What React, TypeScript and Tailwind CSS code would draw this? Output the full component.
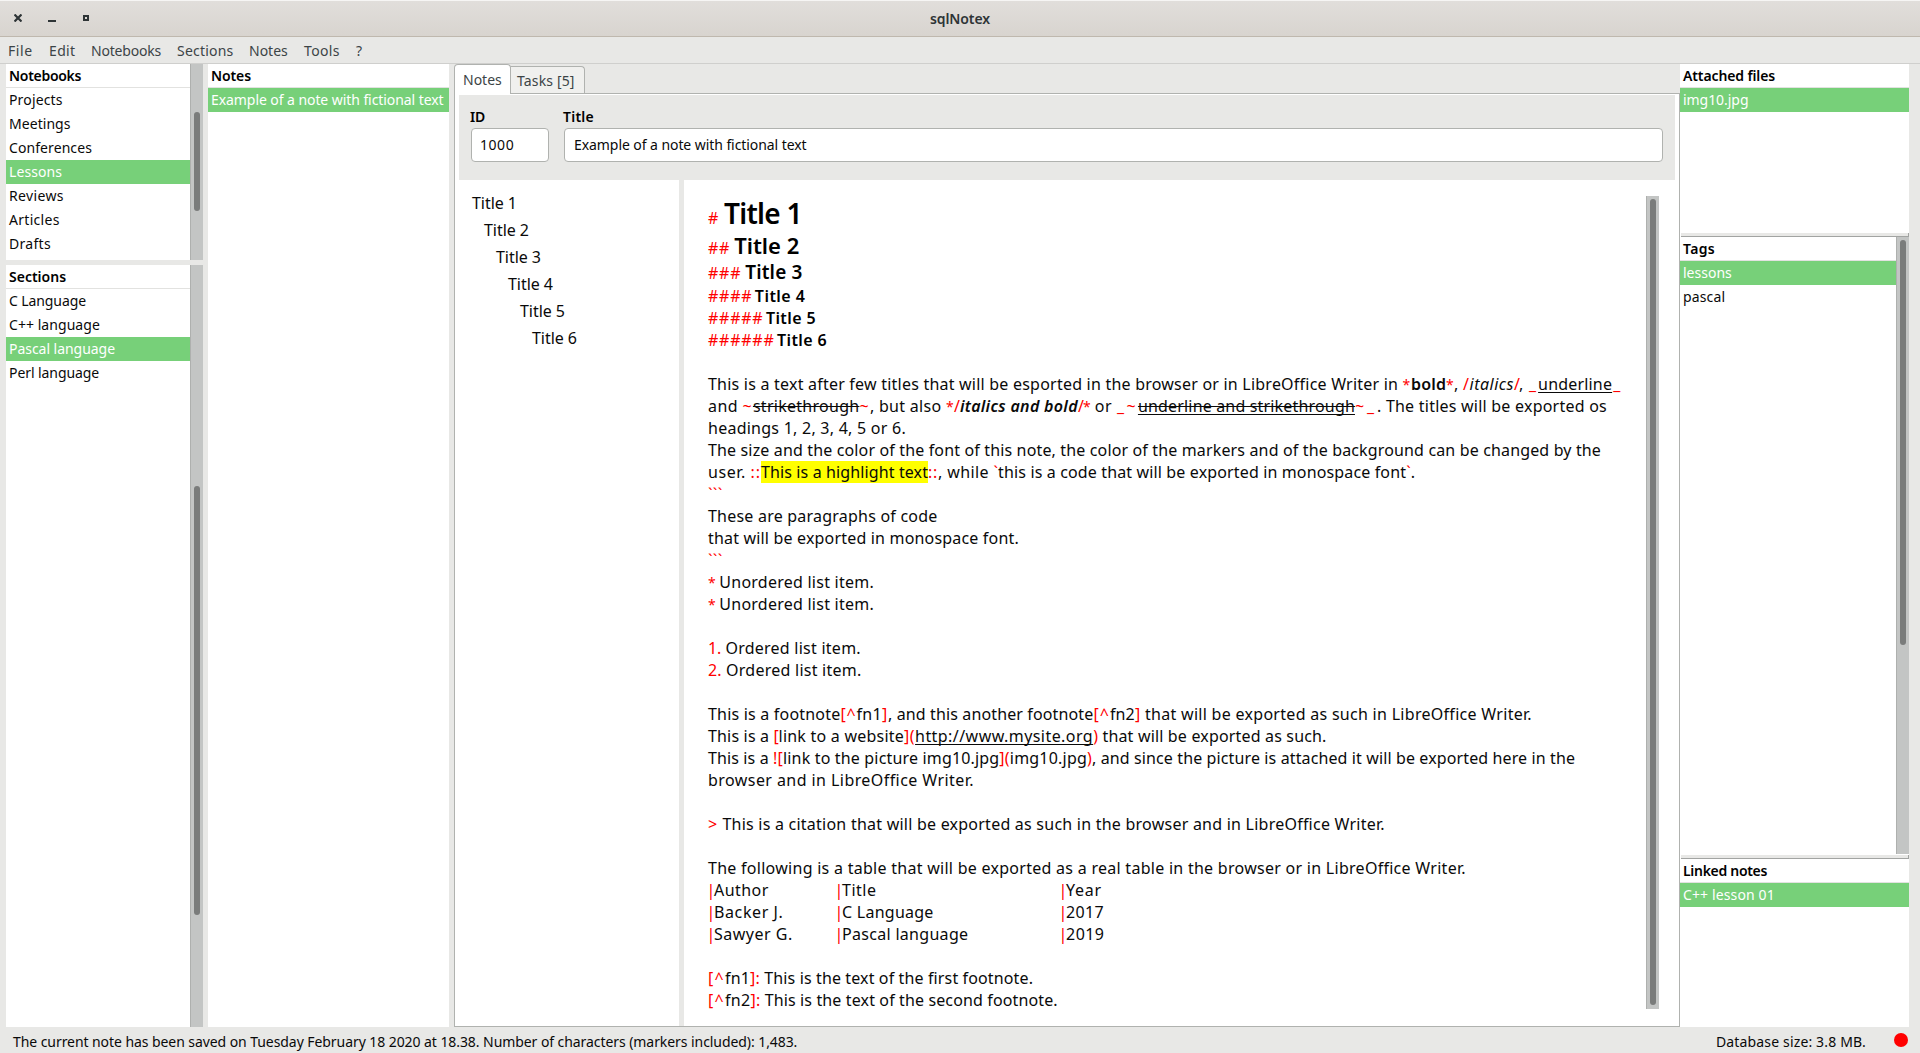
import type { ReactNode } from 'react';

/** Red markdown marker. */
function M({ children, t = 'tracking-[0.2px]' }: { children: ReactNode; t?: string }) {
  return <span className={`text-[#ff0000] ${t}`}>{children}</span>;
}

/** Run of plain note text. */
function T({ children, t = 'tracking-[0.2px]' }: { children: ReactNode; t?: string }) {
  return <span className={t}>{children}</span>;
}

function Line({ children }: { children?: ReactNode }) {
  return <div className="h-[22px] whitespace-pre leading-[22px]">{children}</div>;
}

type Item = { label: string; t: string; selected?: boolean };

function List({ title, titleT, items }: { title: string; titleT: string; items: Item[] }) {
  return (
    <div className="min-w-0 flex-1 bg-white text-sm">
      <div className={`h-6 border-b border-[#e2e2e0] pl-[3px] leading-6 font-semibold whitespace-nowrap text-black ${titleT}`}>
        {title}
      </div>
      {items.map((item) => (
        <div
          key={item.label}
          className={`h-6 pl-[3px] leading-6 whitespace-nowrap ${item.t} ${item.selected ? 'bg-[#77d079] text-white' : 'text-[#0a0a0a]'}`}
        >
          {item.label}
        </div>
      ))}
    </div>
  );
}

function Scrollbar({ thumb }: { thumb: string }) {
  return (
    <div className="w-[13px] shrink-0 border-l border-[#aeb0ae] bg-[#c3c5c4] pl-[3px]">
      <div className={`w-[6px] rounded-full bg-[#7a7c7b] ${thumb}`} />
    </div>
  );
}

function Splitter() {
  return <div className="ml-px h-1 shrink-0 border-r border-b border-[#a2a4a2] bg-[#e8e8e6]" />;
}

const menu = [
  { label: 'File', c: 'w-[41px] tracking-[0.6px]' },
  { label: 'Edit', c: 'w-[42px] tracking-[0.35px]' },
  { label: 'Notebooks', c: 'w-[86px] tracking-[-0.2px]' },
  { label: 'Sections', c: 'w-[72px] tracking-[0.2px]' },
  { label: 'Notes', c: 'w-[55px]' },
  { label: 'Tools', c: 'w-[52px] tracking-[0.35px]' },
  { label: '?', c: '' },
];

const notebooks: Item[] = [
  { label: 'Projects', t: 'tracking-[0.15px]' },
  { label: 'Meetings', t: 'tracking-[0.05px]' },
  { label: 'Conferences', t: 'tracking-[0.08px]' },
  { label: 'Lessons', t: 'tracking-[0.1px]', selected: true },
  { label: 'Reviews', t: 'tracking-[0.35px]' },
  { label: 'Articles', t: 'tracking-[0.3px]' },
  { label: 'Drafts', t: 'tracking-[0.3px]' },
];

const sections: Item[] = [
  { label: 'C Language', t: 'tracking-[-0.1px]' },
  { label: 'C++ language', t: 'tracking-[0.05px]' },
  { label: 'Pascal language', t: 'tracking-[-0.04px]', selected: true },
  { label: 'Perl language', t: 'tracking-[-0.08px]' },
];

const outline = [
  { label: 'Title 1', c: 'pl-0' },
  { label: 'Title 2', c: 'pl-3' },
  { label: 'Title 3', c: 'pl-6' },
  { label: 'Title 4', c: 'pl-9' },
  { label: 'Title 5', c: 'pl-12' },
  { label: 'Title 6', c: 'pl-[60px]' },
];

const headings = [
  { marks: '#', text: 'Title 1', row: 'h-[35px] leading-[44px]', c: 'text-[28px] tracking-[-0.75px] ml-[5px]' },
  { marks: '##', text: 'Title 2', row: 'h-[29px] leading-[34px]', c: 'text-[22px] tracking-normal ml-[4px]' },
  { marks: '###', text: 'Title 3', row: 'h-[25px] leading-[26px]', c: 'text-[19px] tracking-[0.15px] ml-[4px]' },
  { marks: '####', text: 'Title 4', row: 'h-[22px] leading-[22px]', c: 'text-[16px] tracking-[0.45px] ml-[2.5px]' },
  { marks: '#####', text: 'Title 5', row: 'h-[22px] leading-[22px]', c: 'text-[16px] tracking-[0.4px] ml-[2.5px]' },
  { marks: '######', text: 'Title 6', row: 'h-[22px] leading-[22px]', c: 'text-[16px] tracking-[0.4px] ml-[2.5px]' },
];

const table = [
  [['Author', 'tracking-[0.45px]'], ['Title', 'tracking-[0.5px]'], ['Year', 'tracking-[0.7px]']],
  [['Backer J.', 'tracking-[0.6px]'], ['C Language', 'tracking-[0.25px]'], ['2017', 'tracking-[0.35px]']],
  [['Sawyer G.', 'tracking-[0.5px]'], ['Pascal language', 'tracking-[0.3px]'], ['2019', 'tracking-[0.45px]']],
];

function NoteText() {
  return (
    <div className="flex-1 overflow-hidden pt-4 pl-6 text-base text-[#0a0a0a]">
      {headings.map((h) => (
        <div key={h.text} className={`whitespace-pre ${h.row}`}>
          <M t="tracking-[0.75px]">{h.marks}</M>
          <span className={`leading-none font-semibold text-black ${h.c}`}>{h.text}</span>
        </div>
      ))}
      <Line />
      <Line>
        <T t="tracking-[0.22px]">{'This is a text after few titles that will be esported in the browser or in LibreOffice Writer in '}</T>
        <M t="text-sm tracking-[0.8px]">*</M>
        <b className="font-semibold tracking-[0.14px]">bold</b>
        <M t="text-sm tracking-[0.3px]">*</M>
        <T t="tracking-[0.27px]">{', '}</T>
        <M t="tracking-[0.5px]">/</M>
        <i className="tracking-[0.5px]">italics</i>
        <M t="tracking-[-0.9px]">/</M>
        <T t="tracking-[0.77px]">{', '}</T>
        <M t="tracking-[1.9px]">_</M>
        <span className="tracking-[0.18px] underline decoration-1 underline-offset-[2px] [text-decoration-skip-ink:none]">underline</span>
        <M t="tracking-[1.9px] ml-px">_</M>
      </Line>
      <Line>
        <T t="tracking-[0.4px]">{'and '}</T>
        <M t="tracking-[1.3px]">~</M>
        <span className="tracking-[0.27px] line-through">strikethrough</span>
        <M t="tracking-[1.3px]">~</M>
        <T t="tracking-[0.3px]">{', but also '}</T>
        <M t="text-sm tracking-[0.3px]">*</M>
        <M t="tracking-normal">/</M>
        <b className="font-semibold tracking-[0.31px] italic">italics and bold</b>
        <M t="tracking-[-0.85px]">/</M>
        <M t="text-sm tracking-[-0.85px]">*</M>
        <T t="tracking-[0.6px]">{' or '}</T>
        <M t="tracking-[2.37px]">_~</M>
        <span className="tracking-[0.17px] underline decoration-1 underline-offset-[2px] [text-decoration-skip-ink:none]">
          <span className="line-through">underline and strikethrough</span>
        </span>
        <M t="tracking-[2.87px]">~_</M>
        <T t="tracking-[0.23px]">. The titles will be exported os</T>
      </Line>
      <Line><T t="tracking-[0.25px]">headings 1, 2, 3, 4, 5 or 6.</T></Line>
      <Line>
        <T t="tracking-[0.147px]">
          The size and the color of the font of this note, the color of the markers and of the background can be changed by the
        </T>
      </Line>
      <Line>
        <T t="tracking-[0.57px]">{'user. '}</T>
        <M t="tracking-[0.96px]">::</M>
        <span className="bg-[#ffff00] tracking-[0.12px]">This is a highlight text</span>
        <M t="tracking-[0.71px]">::</M>
        <T t="tracking-[0.39px]">{', while '}</T>
        <M t="tracking-normal">`</M>
        <T t="tracking-[0.14px]">this is a code that will be exported in monospace font</T>
        <M t="tracking-normal">`</M>
        <T>.</T>
      </Line>
      <Line><M t="tracking-[0.33px]">```</M></Line>
      <Line><T t="tracking-[0.22px]">These are paragraphs of code</T></Line>
      <Line><T t="tracking-[0.18px]">that will be exported in monospace font.</T></Line>
      <Line><M t="tracking-[0.33px]">```</M></Line>
      <Line><M t="text-sm tracking-normal">{'* '}</M><T t="tracking-[0.24px]">Unordered list item.</T></Line>
      <Line><M t="text-sm tracking-normal">{'* '}</M><T t="tracking-[0.24px]">Unordered list item.</T></Line>
      <Line />
      <Line><M t="tracking-[-0.23px]">1.</M><T t="tracking-[0.25px]">{' Ordered list item.'}</T></Line>
      <Line><M t="tracking-[0.1px]">2.</M><T t="tracking-[0.25px]">{' Ordered list item.'}</T></Line>
      <Line />
      <Line>
        <T>This is a footnote</T>
        <M t="tracking-[0.79px]">[^</M>
        <T t="tracking-[0.32px]">fn1</T>
        <M t="tracking-[0.73px]">]</M>
        <T t="tracking-[0.13px]">, and this another footnote</T>
        <M t="tracking-[1.04px]">[^</M>
        <T t="tracking-[0.15px]">fn2</T>
        <M t="tracking-[0.4px]">]</M>
        <T t="tracking-[0.29px]">{' that will be exported as such in LibreOffice Writer.'}</T>
      </Line>
      <Line>
        <T t="tracking-[0.17px]">{'This is a '}</T>
        <M t="tracking-[-0.27px]">[</M>
        <T t="tracking-[0.23px]">link to a website</T>
        <M t="tracking-[0.46px]">](</M>
        <span className="tracking-[0.44px] underline decoration-1 underline-offset-[2px] [text-decoration-skip-ink:none]">http://www.mysite.org</span>
        <M>)</M>
        <T t="tracking-[0.17px]">{' that will be exported as such.'}</T>
      </Line>
      <Line>
        <T t="tracking-[0.12px]">{'This is a '}</T>
        <M>![</M>
        <T t="tracking-[0.17px]">link to the picture img10.jpg</T>
        <M>](</M>
        <T>img10.jpg</T>
        <M>)</M>
        <T t="tracking-[0.12px]">, and since the picture is attached it will be exported here in the</T>
      </Line>
      <Line><T t="tracking-[0.43px]">browser and in LibreOffice Writer.</T></Line>
      <Line />
      <Line>
        <M t="tracking-[0.84px]">&gt;</M>
        <T t="tracking-[0.235px]">{' This is a citation that will be exported as such in the browser and in LibreOffice Writer.'}</T>
      </Line>
      <Line />
      <Line>
        <T t="tracking-[0.275px]">
          The following is a table that will be exported as a real table in the browser or in LibreOffice Writer.
        </T>
      </Line>
      {table.map((row) => (
        <div key={row[0][0]} className="-ml-[1.5px] grid h-[22px] grid-cols-[128px_224px_1fr] leading-[22px] whitespace-nowrap">
          {row.map(([text, t]) => (
            <div key={text}>
              <M t="tracking-[-1.3px]">|</M>
              <T t={t}>{text}</T>
            </div>
          ))}
        </div>
      ))}
      <Line />
      <Line>
        <M t="tracking-[1.29px]">[^</M><T t="tracking-[0.15px]">fn1</T><M>]:</M>
        <T t="tracking-[0.13px]">{' This is the text of the first footnote.'}</T>
      </Line>
      <Line>
        <M t="tracking-[1.29px]">[^</M><T t="tracking-[0.3px]">fn2</T><M>]:</M>
        <T t="tracking-[0.13px]">{' This is the text of the second footnote.'}</T>
      </Line>
    </div>
  );
}

export default function App() {
  return (
    <div className="flex h-[1053px] w-[1920px] flex-col overflow-hidden bg-[#e8e8e6] font-['Noto_Sans',sans-serif] text-sm text-[#0a0a0a]">
      <header className="grid h-[37px] shrink-0 grid-cols-[1fr_auto_1fr] border-t border-b border-t-[#f6f5f4] border-b-[#bfb8ae] bg-linear-to-b from-[#e1dedb] to-[#d8d4cf]">
        <div className="flex gap-[26px] pt-[13px] pl-[14px]">
          <svg width="8" height="8" viewBox="0 0 8 8" stroke="#2e3436" strokeWidth="2.2">
            <path d="M0.5 0.5L7.5 7.5M7.5 0.5L0.5 7.5" />
          </svg>
          <svg width="8" height="8" viewBox="0 0 8 8" fill="#2e3436">
            <path d="M0 6h8v2H0z" />
          </svg>
          <svg width="8" height="8" viewBox="0 0 8 8" fill="none" stroke="#2e3436" strokeWidth="2" className="ml-px">
            <path d="M1 2h4v4H1z" />
          </svg>
        </div>
        <div className="leading-9 font-semibold tracking-[-0.1px] text-[#2e3436]">sqlNotex</div>
      </header>

      <nav className="flex h-[27px] shrink-0 border-b border-[#cfcfcd] pl-[8px] leading-[27px] text-[#3c4446]">
        {menu.map((m) => (
          <div key={m.label} className={m.c}>{m.label}</div>
        ))}
      </nav>

      <main className="flex h-[963px] shrink-0 pl-[6px]">
        <div className="flex w-[197px] flex-col gap-[5px]">
          <div className="flex h-[196px]">
            <List title="Notebooks" titleT="tracking-[-0.3px]" items={notebooks} />
            <Scrollbar thumb="mt-12 h-[99px]" />
          </div>
          <div className="flex flex-1">
            <List title="Sections" titleT="tracking-normal" items={sections} />
            <Scrollbar thumb="mt-[221px] h-[429px]" />
          </div>
        </div>

        <div className="ml-[5px] flex w-[241px]">
          <List
            title="Notes"
            titleT="tracking-[-0.1px]"
            items={[{ label: 'Example of a note with fictional text', t: 'tracking-[-0.07px]', selected: true }]}
          />
        </div>

        <div className="ml-[5px] flex w-[1226px] flex-col">
          <div className="flex h-[29px] text-[#3c4446]">
            <div className="z-10 -mb-px w-[57px] rounded-t border border-b-0 border-[#b0b2af] bg-white pl-2 leading-[30px]">Notes</div>
            <div className="-ml-px mt-[2px] w-[75px] rounded-tr border border-b-0 border-[#b0b2af] bg-[#f0f0ee] pl-[6px] leading-[27px] tracking-[0.15px] whitespace-nowrap">
              Tasks [5]
            </div>
          </div>
          <div className="flex flex-1 flex-col border border-[#b0b2af] bg-white px-1 pt-px">
            <div className="flex h-[85px] gap-[15px] bg-[#e8e8e6] pt-3 pr-3 pl-3">
              <div className="w-[78px]">
                <div className="-ml-px h-[21px] leading-[19px] font-semibold tracking-[-0.2px] text-black">ID</div>
                <div className="h-[34px] rounded border border-[#b0b2af] bg-white pl-2 leading-[31px] tracking-[0.55px]">1000</div>
              </div>
              <div className="flex-1">
                <div className="-ml-px h-[21px] leading-[19px] font-semibold tracking-[0.25px] text-black">Title</div>
                <div className="h-[34px] rounded border border-[#b0b2af] bg-white pl-2 leading-[31px] tracking-[-0.07px]">
                  <span className="ml-px">Example of a note with fictional text</span>
                </div>
              </div>
            </div>
            <div className="flex flex-1">
              <div className="w-[220px] pt-[10px] pl-[13px] text-base">
                {outline.map((o) => (
                  <div key={o.label} className={`h-[27px] leading-[27px] tracking-[-0.05px] ${o.c}`}>{o.label}</div>
                ))}
              </div>
              <div className="w-[5px] bg-[#e8e8e6]" />
              <NoteText />
              <div className="mt-4 mr-4 flex h-[813px]">
                <Scrollbar thumb="mt-[3px] h-[806px]" />
              </div>
            </div>
          </div>
        </div>

        <div className="flex w-[229px] flex-col bg-white">
          <div className="flex h-[169px]">
            <List title="Attached files" titleT="tracking-[-0.12px]" items={[{ label: 'img10.jpg', t: 'tracking-[-0.05px]', selected: true }]} />
          </div>
          <Splitter />
          <div className="mb-px flex h-[617px]">
            <List
              title="Tags"
              titleT="tracking-[0.3px]"
              items={[
                { label: 'lessons', t: 'tracking-normal', selected: true },
                { label: 'pascal', t: 'tracking-[0.15px]' },
              ]}
            />
            <Scrollbar thumb="mt-[3px] h-[405px]" />
          </div>
          <Splitter />
          <div className="flex flex-1">
            <List title="Linked notes" titleT="tracking-[-0.3px]" items={[{ label: 'C++ lesson 01', t: 'tracking-[0.12px]', selected: true }]} />
          </div>
        </div>
      </main>

      <footer className="flex flex-1 justify-between pr-3 pl-[13px] leading-[29px] whitespace-nowrap">
        <div className="tracking-[-0.07px]">
          The current note has been saved on Tuesday February 18 2020 at 18.38. Number of characters (markers included): 1,483.
        </div>
        <div className="flex">
          <div className="w-[178px] tracking-[0.15px]">Database size: 3.8 MB.</div>
          <div className="mt-[6px] h-[14px] w-[14px] rounded-full bg-[#ff0000]" />
        </div>
      </footer>
    </div>
  );
}
